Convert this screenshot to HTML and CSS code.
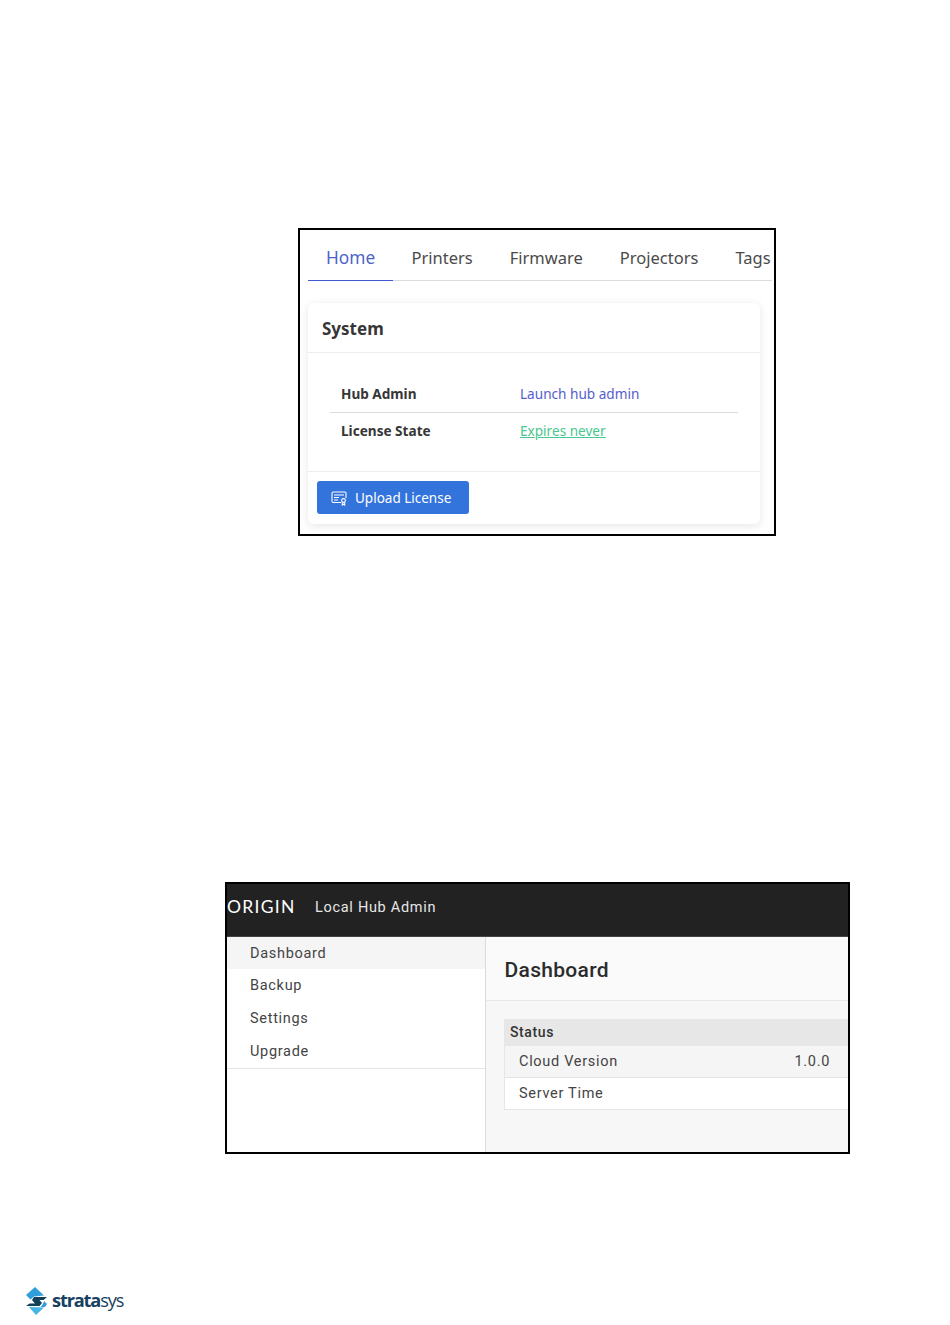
FILE: index.html
```html
<!DOCTYPE html>
<html lang="en">
<head>
<meta charset="utf-8">
<title>Local Hub Admin</title>
<link rel="stylesheet" href="styles.css">
</head>
<body>
<section class="frame frame-system">
  <nav class="tabs">
    <a class="tab tab-active">Home</a>
    <a class="tab">Printers</a>
    <a class="tab">Firmware</a>
    <a class="tab">Projectors</a>
    <a class="tab">Tags</a>
  </nav>
  <div class="card">
    <h2 class="card-title">System</h2>
    <div class="card-body">
      <div class="info-row info-row-first">
        <span class="info-label">Hub Admin</span>
        <a class="info-link">Launch hub admin</a>
      </div>
      <div class="info-row">
        <span class="info-label">License State</span>
        <a class="info-success">Expires never</a>
      </div>
    </div>
    <div class="card-foot">
      <button class="btn" type="button">
        <svg class="btn-icon" viewBox="0 0 16 16" width="16" height="16" fill="none" stroke="currentColor" stroke-width="1.1">
          <path d="M10 12.500H2.200a1.200 1.200 0 0 1-1.200-1.200V3.200A1.200 1.200 0 0 1 2.200 2h11.600A1.200 1.200 0 0 1 15 3.200V8"/>
          <path d="M3 5h10M3 7.500h5M3 10h4"/>
          <circle cx="12.500" cy="10.500" r="1.900"/>
          <path d="M11.300 12.200V15l1.200-.8 1.200.8v-2.800"/>
        </svg>
        <span>Upload License</span>
      </button>
    </div>
  </div>
</section>

<section class="frame frame-hub">
  <header class="hub-bar">
    <span class="origin">ORIGIN</span>
    <span class="hub-name">Local Hub Admin</span>
  </header>
  <div class="hub-main">
    <aside class="side">
      <ul class="side-list">
        <li class="side-item side-item-active">Dashboard</li>
        <li class="side-item">Backup</li>
        <li class="side-item">Settings</li>
        <li class="side-item">Upgrade</li>
      </ul>
    </aside>
    <main class="content">
      <h1 class="content-title">Dashboard</h1>
      <div class="status">
        <div class="status-head">Status</div>
        <div class="status-row status-row-alt"><span>Cloud Version</span><span class="status-value">1.0.0</span></div>
        <div class="status-row"><span>Server Time</span></div>
      </div>
    </main>
  </div>
</section>

<footer class="brand">
  <svg class="brand-mark" viewBox="0 0 21 28" width="21" height="28">
    <polygon fill="#2f9fdc" points="9,0 18,8.500 8,9.500 4.500,12.500 0,8"/>
    <polygon fill="#123f5c" points="8,10 21,10 17.500,13 13.500,13 16,16 13.500,19 0,19 3.500,16.500 9,16.500 6,13"/>
    <polygon fill="#2f9fdc" points="18,14 21,17 19,20 14.500,20 17,17"/>
    <polygon fill="#46b4e6" points="3,20 18,20.500 10,28"/>
  </svg>
  <span class="brand-name"><b class="brand-strong">strata</b>sys</span>
</footer>
</body>
</html>
```
FILE: styles.css
```css
* { box-sizing: border-box; }
html, body { margin: 0; padding: 0; }
body {
  width: 950px;
  height: 1325px;
  overflow: hidden;
  background: #fff;
  font-family: "Noto Sans", sans-serif;
}
.frame { border: 2px solid #000; overflow: hidden; background: #fff; }

.frame-system {
  width: 478px;
  height: 308px;
  margin: 228px 0 0 298px;
  padding: 0 2px 0 8px;
}
.tabs {
  display: flex;
  height: 51px;
  border-bottom: 1px solid #dbdbdb;
  color: #4a4a4a;
  font-size: 16.500px;
  white-space: nowrap;
}
.tab { flex: none; padding: 16px 18.500px 0; line-height: 24px; height: 51px; }
.tab-active {
  color: #4d63c9;
  border-bottom: 1px solid #3f5bd3;
  width: 85px;
  padding-left: 18px;
  padding-right: 0;
  font-size: 17.300px;
}
.card {
  width: 452px;
  height: 221px;
  margin-top: 22px;
  background: #fff;
  border-radius: 6px;
  box-shadow: 0 2px 10px rgba(10, 10, 10, .1);
  display: flex;
  flex-direction: column;
}
.card-title {
  margin: 0;
  height: 50px;
  padding: 0 14px;
  border-bottom: 1px solid #ededed;
  font-size: 17px;
  line-height: 52px;
  font-weight: 700;
  color: #363636;
}
.card-body { height: 119px; padding: 22px 22px 0; border-bottom: 1px solid #ededed; }
.info-row {
  display: flex;
  height: 38px;
  padding: 8px 11px 0;
  font-size: 13.600px;
  line-height: 19px;
}
.info-row-first { height: 38px; padding-top: 9px; border-bottom: 1px solid #dbdbdb; }
.info-label { width: 179px; font-weight: 700; color: #363636; }
.info-link { color: #5560cc; }
.info-success { color: #48c78e; text-decoration: underline; }
.card-foot { padding: 9px; }
.btn {
  display: flex;
  align-items: center;
  gap: 8px;
  width: 152px;
  height: 33px;
  padding: 0 0 0 14px;
  border: 0;
  border-radius: 3px;
  background: #3273dc;
  color: #fff;
  font-family: "Noto Sans", sans-serif;
  font-size: 13.500px;
}
.btn-icon { flex: none; }

.frame-hub {
  width: 625px;
  height: 272px;
  margin: 346px 0 0 225px;
  font-family: Roboto, sans-serif;
  letter-spacing: .7px;
  color: #444;
  font-size: 14.500px;
}
.hub-bar {
  display: flex;
  align-items: center;
  height: 53px;
  padding-bottom: 5px;
  background: #222;
  color: #e6e6e6;
  border-bottom: 1px solid #444;
}
.origin {
  width: 88px;
  margin-bottom: 2px;
  font-family: Lato, sans-serif;
  font-size: 17.500px;
  font-weight: 400;
  letter-spacing: 1.300px;
  color: #fff;
}
.hub-name { font-size: 14.500px; }
.hub-main { display: flex; height: 215px; }
.side { flex: none; width: 259px; border-right: 1px solid #dbdbdb; background: #fff; }
.side-list { margin: 0; padding: 0; list-style: none; border-bottom: 1px solid #e6e6e6; height: 132px; }
.side-item { height: 33px; padding-left: 23px; line-height: 33px; }
.side-item-active { background: #f5f5f5; height: 32px; }
.content { flex: 1; background: #f7f7f7; min-width: 0; }
.content-title {
  margin: 0;
  height: 64px;
  padding-left: 18.500px;
  background: #fafafa;
  border-bottom: 1px solid #e8e8e8;
  font-size: 21px;
  line-height: 66px;
  font-weight: 500;
  letter-spacing: .3px;
  color: #2b2b2b;
}
.status { margin: 18px 0 0 18px; border-left: 1px solid #e6e6e6; background: #fff; }
.status-head {
  height: 27px;
  padding-left: 5px;
  background: #e7e7e7;
  font-weight: 500;
  font-size: 14px;
  line-height: 27px;
  letter-spacing: .6px;
  color: #333;
}
.status-row {
  display: flex;
  height: 32px;
  padding-left: 14px;
  line-height: 31px;
  border-bottom: 1px solid #e4e4e4;
}
.status-row-alt { background: #f5f5f5; }
.status-value { margin-left: 176.500px; }

.brand {
  display: flex;
  align-items: center;
  gap: 5px;
  margin: 133px 0 0 26px;
  height: 28px;
}
.brand-mark { flex: none; }
.brand-name {
  margin-bottom: 3px;
  font-family: "Open Sans", sans-serif;
  font-size: 18.200px;
  letter-spacing: -1.150px;
  color: #173f5f;
  line-height: 26px;
}
.brand-strong { font-weight: 700; }
```
